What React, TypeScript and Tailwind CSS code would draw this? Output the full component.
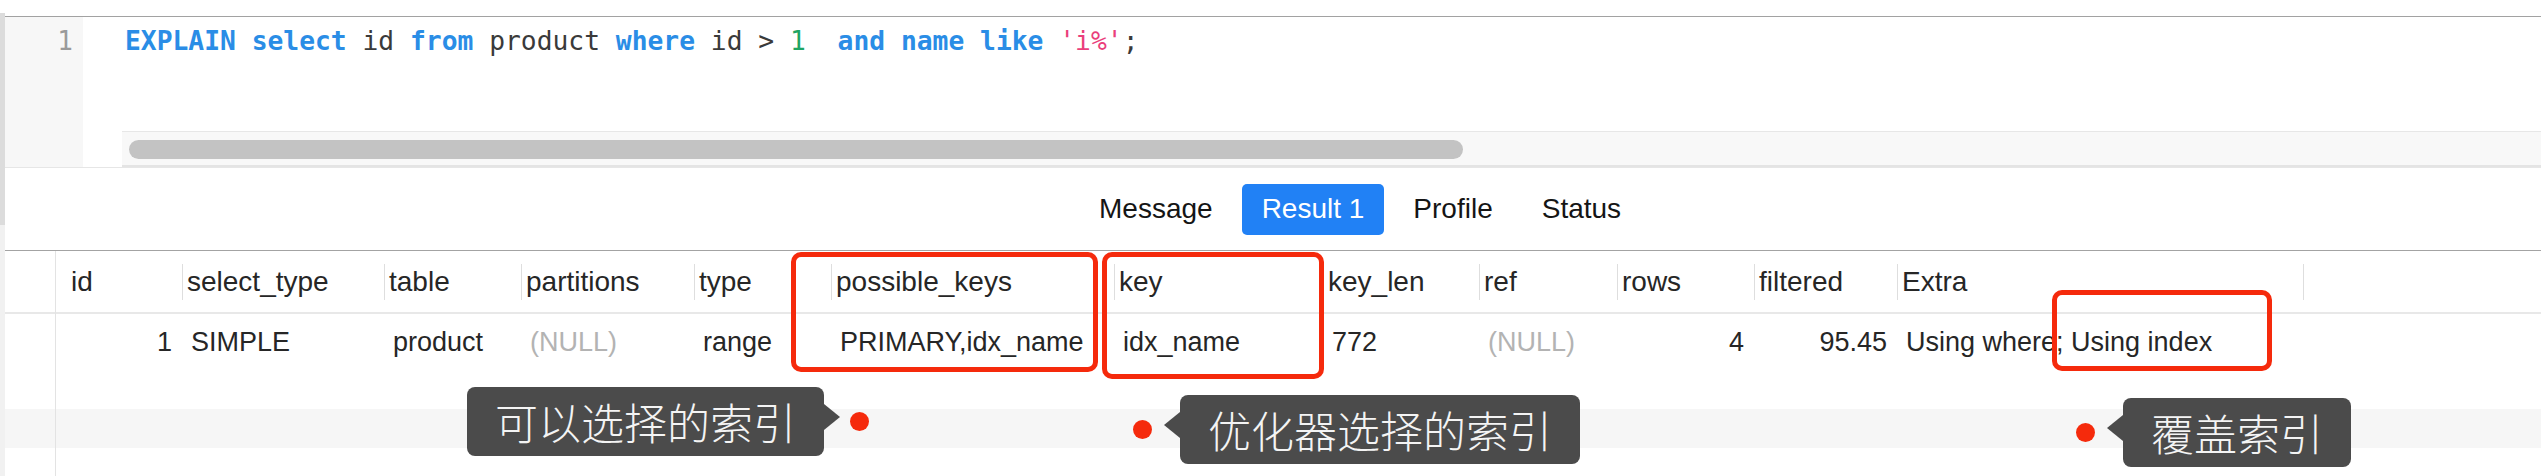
import React from 'react';

type Col = {
  name: string;
  w: number;
  value: string;
  right?: boolean;
  nul?: boolean;
};

const cols: Col[] = [
  { name: 'id', w: 126, value: '1', right: true },
  { name: 'select_type', w: 202, value: 'SIMPLE' },
  { name: 'table', w: 137, value: 'product' },
  { name: 'partitions', w: 173, value: '(NULL)', nul: true },
  { name: 'type', w: 137, value: 'range' },
  { name: 'possible_keys', w: 283, value: 'PRIMARY,idx_name' },
  { name: 'key', w: 209, value: 'idx_name' },
  { name: 'key_len', w: 156, value: '772' },
  { name: 'ref', w: 138, value: '(NULL)', nul: true },
  { name: 'rows', w: 137, value: '4', right: true },
  { name: 'filtered', w: 143, value: '95.45', right: true },
  { name: 'Extra', w: 406, value: 'Using where; Using index' },
];

const tabs = ['Message', 'Result 1', 'Profile', 'Status'];

// callout bubble with a small arrow and a red dot
const Callout: React.FC<{
  text: string;
  side: 'left' | 'right';
  className: string;
}> = ({ text, side, className }) => {
  const dot = <div className="w-[19px] h-[19px] rounded-full bg-[#f52a0c] shrink-0" />;
  const arrow = (
    <svg width="16" height="26" viewBox="0 0 16 26" className="shrink-0 -mt-[10px]">
      {side === 'right' ? (
        <polygon points="0,0 16,13 0,26" fill="#4b4b4b" />
      ) : (
        <polygon points="16,0 0,13 16,26" fill="#4b4b4b" />
      )}
    </svg>
  );
  const bubble = (
    <div className="h-[69px] flex items-center px-[28px] rounded-[8px] bg-[#4b4b4b] text-[#f4f4f4] text-[43px] font-light whitespace-nowrap">
      {text}
    </div>
  );
  return (
    <div className={`absolute flex items-center ${className}`} style={{ fontFamily: '"Noto Sans CJK SC", sans-serif' }}>
      {side === 'right' ? (
        <>
          {bubble}
          {arrow}
          <div className="w-[10px]" />
          {dot}
        </>
      ) : (
        <>
          {dot}
          <div className="w-[12px]" />
          {arrow}
          {bubble}
        </>
      )}
    </div>
  );
};

const Kw: React.FC<{ children: React.ReactNode }> = ({ children }) => (
  <span className="text-[#2a8de6] font-bold">{children}</span>
);

export default function App() {
  return (
    <div
      className="relative w-[2541px] h-[476px] bg-white overflow-hidden flex"
      style={{ fontFamily: '"Liberation Sans", Arial, sans-serif' }}
    >
      {/* window edge */}
      <div className="w-[5px] flex flex-col shrink-0">
        <div className="h-[13px] bg-white" />
        <div className="h-[212px] bg-[#dcdcdc]" />
        <div className="flex-1 bg-[#f1f1f1]" />
      </div>

      <div className="flex-1 flex flex-col">
        <div className="h-[16px]" />

        {/* SQL editor */}
        <div className="h-[152px] flex border-t border-b border-t-[#a2a2a2] border-b-[#e6e6e6]">
          <div
            className="w-[78px] bg-[#f7f7f7] text-right pr-[10px] pt-[6px] text-[#9a9a9a] text-[26px] leading-[36px]"
            style={{ fontFamily: '"DejaVu Sans Mono", monospace' }}
          >
            1
          </div>
          <div className="flex-1 flex flex-col">
            <div
              className="flex-1 pl-[42px] pt-[6px] text-[26.3px] leading-[36px] text-[#3a3a3a] whitespace-pre"
              style={{ fontFamily: '"DejaVu Sans Mono", monospace' }}
            >
              <Kw>EXPLAIN</Kw> <Kw>select</Kw> id <Kw>from</Kw> product <Kw>where</Kw> id &gt;{' '}
              <span className="text-[#1fa463]">1</span>{'  '}
              <Kw>and</Kw> <Kw>name</Kw> <Kw>like</Kw> <span className="text-[#ea3f7c]">'i%'</span>;
            </div>
            <div className="h-[36px] ml-[39px] bg-[#f8f8f8] border-t border-b-2 border-t-[#e7e7e7] border-b-[#e4e4e4] pt-[8px] pl-[7px]">
              <div className="w-[1334px] h-[19px] rounded-full bg-[#c3c3c3]" />
            </div>
          </div>
        </div>

        {/* result tabs */}
        <div className="h-[82px] flex items-center pl-[1074px] gap-[9px] text-[28px] text-[#151515]">
          {tabs.map((t) =>
            t === 'Result 1' ? (
              <div key={t} className="h-[51px] px-[20px] flex items-center rounded-[5px] bg-[#2181f5] text-white">
                {t}
              </div>
            ) : (
              <div key={t} className="h-[51px] px-[20px] flex items-center">
                {t}
              </div>
            )
          )}
        </div>

        {/* result grid */}
        <div className="flex-1 flex border-t border-[#a3a3a3] text-[27px] text-[#262626]">
          <div className="w-[51px] border-r border-[#e3e3e3] flex flex-col">
            <div className="h-[63px] border-b-2 border-[#e8e8e8]" />
            <div className="h-[56px]" />
            <div className="h-[39px]" />
            <div className="h-[39px] bg-[#f6f6f6]" />
          </div>
          <div className="flex-1 flex flex-col">
            <div className="h-[63px] flex border-b-2 border-[#e8e8e8] text-[28px]">
              {cols.map((c, i) => (
                <div key={c.name} className="flex items-center shrink-0" style={{ width: c.w }}>
                  {i > 0 && <div className="w-px h-[36px] bg-[#dedede] shrink-0" />}
                  <span className={i === 0 ? 'pl-[15px]' : 'pl-[4px]'}>{c.name}</span>
                </div>
              ))}
              <div className="flex items-center">
                <div className="w-px h-[36px] bg-[#dedede]" />
              </div>
            </div>
            <div className="h-[56px] flex">
              {cols.map((c) => (
                <div
                  key={c.name}
                  className={`flex items-center shrink-0 ${c.right ? 'justify-end pr-[10px]' : 'pl-[9px]'} ${
                    c.nul ? 'text-[#b3b3b3]' : ''
                  }`}
                  style={{ width: c.w }}
                >
                  {c.value}
                </div>
              ))}
            </div>
            <div className="h-[39px]" />
            <div className="h-[39px] bg-[#f6f6f6]" />
          </div>
        </div>
      </div>

      {/* highlight boxes */}
      <div className="absolute left-[791px] top-[252px] w-[307px] h-[120px] border-[5px] border-[#f52a0c] rounded-[10px]" />
      <div className="absolute left-[1102px] top-[252px] w-[222px] h-[127px] border-[5px] border-[#f52a0c] rounded-[10px]" />
      <div className="absolute left-[2052px] top-[290px] w-[220px] h-[81px] border-[5px] border-[#f52a0c] rounded-[10px]" />

      <Callout text="可以选择的索引" side="right" className="left-[467px] top-[387px]" />
      <Callout text="优化器选择的索引" side="left" className="left-[1133px] top-[395px]" />
      <Callout text="覆盖索引" side="left" className="left-[2076px] top-[398px]" />
    </div>
  );
}
